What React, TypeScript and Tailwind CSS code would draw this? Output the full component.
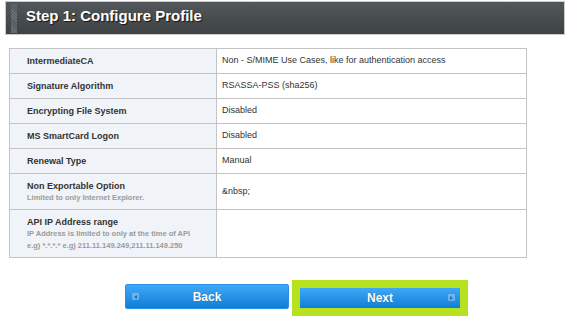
import React from 'react';

type Row = {
    label: string;
    sub?: string[];
    value: string;
    h: string;
};

const rows: Row[] = [
    { label: 'IntermediateCA', value: 'Non - S/MIME Use Cases, like for authentication access', h: 'h-[25px]' },
    { label: 'Signature Algorithm', value: 'RSASSA-PSS (sha256)', h: 'h-[25px]' },
    { label: 'Encrypting File System', value: 'Disabled', h: 'h-[25px]' },
    { label: 'MS SmartCard Logon', value: 'Disabled', h: 'h-[25px]' },
    { label: 'Renewal Type', value: 'Manual', h: 'h-[25px]' },
    { label: 'Non Exportable Option', sub: ['Limited to only Internet Explorer.'], value: '&nbsp;', h: 'h-[36px]' },
    {
        label: 'API IP Address range',
        sub: ['IP Address is limited to only at the time of API', 'e.g) *.*.*.* e.g) 211.11.149.249,211.11.149.250'],
        value: '',
        h: 'h-[48px]',
    },
];

const BtnIcon = ({ dir }: { dir: 'left' | 'right' }) => (
    <span className="flex h-[7px] w-[7px] items-center justify-center rounded-[1px] bg-white/30">
        <svg width="3" height="4" viewBox="0 0 3 4">
            {dir === 'left' ? (
                <path d="M3 0 L0 2 L3 4 Z" fill="#1d6fb8" />
            ) : (
                <path d="M0 0 L3 2 L0 4 Z" fill="#1d6fb8" />
            )}
        </svg>
    </span>
);

export default function App() {
    return (
        <div className="h-[316px] w-[570px] overflow-hidden bg-white font-['Liberation_Sans',Arial,sans-serif]">
            {/* title bar */}
            <div className="mx-[5px] mt-[1px] flex h-[34px] items-center border border-[#c9cbcc] bg-gradient-to-b from-[#52575b] to-[#3e4244] pl-[5px]">
                <div className="h-[29px] w-[6px] bg-[repeating-linear-gradient(45deg,#6b7075_0px,#6b7075_1px,#54595d_1px,#54595d_2px)]" />
                <h1 className="ml-[9px] mb-[3px] text-[15px] font-bold text-white [text-shadow:1px_1px_1px_rgba(0,0,0,0.7)]">
                    Step 1: Configure Profile
                </h1>
            </div>

            {/* profile table */}
            <div className="ml-[9px] mt-[13px] grid w-[518px] grid-cols-[207px_310px] border-l border-t border-[#c4c4c4] text-[9px] text-[#333]">
                {rows.map((r) => (
                    <React.Fragment key={r.label}>
                        <div className={`${r.h} flex flex-col justify-center border-b border-r border-[#c4c4c4] bg-[#f0f4f8] pl-[17px]`}>
                            <div className="font-bold leading-[12px]">{r.label}</div>
                            {r.sub?.map((s) => (
                                <div key={s} className="text-[7.5px] font-bold leading-[12px] text-[#9a9a9a]">
                                    {s}
                                </div>
                            ))}
                        </div>
                        <div className={`${r.h} flex items-center border-b border-r border-[#c4c4c4] pl-[5px]`}>
                            {r.value}
                        </div>
                    </React.Fragment>
                ))}
            </div>

            {/* actions */}
            <div className="mt-[22px] flex items-start pl-[125px]">
                <button className="relative mt-[4px] flex h-[25px] w-[164px] items-center justify-center rounded-[2px] border border-[#2b93e6] bg-gradient-to-b from-[#3ea8f8] to-[#0a7fd5] text-[12px] font-bold text-white [text-shadow:0_0_1px_rgba(0,0,0,0.4)]">
                    <span className="absolute left-[6px] top-[8px]">
                        <BtnIcon dir="left" />
                    </span>
                    Back
                </button>
                <div className="ml-[3px] bg-[#b6e21f] p-[8px]">
                    <button className="relative flex h-[20px] w-[160px] items-center justify-center bg-gradient-to-b from-[#3ea8f8] to-[#0a7fd5] text-[12px] font-bold text-white [text-shadow:0_0_1px_rgba(0,0,0,0.4)]">
                        Next
                        <span className="absolute right-[5px] top-[6px]">
                            <BtnIcon dir="right" />
                        </span>
                    </button>
                </div>
            </div>
        </div>
    );
}
